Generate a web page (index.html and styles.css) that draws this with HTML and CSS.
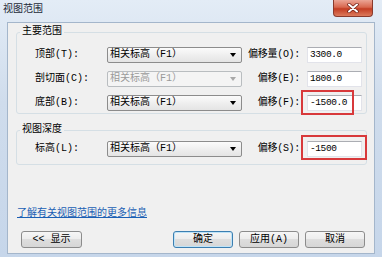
FILE: index.html
```html
<!DOCTYPE html>
<html lang="zh-CN">
<head>
    <meta charset="UTF-8">
    <meta name="viewport" content="width=device-width, initial-scale=1.0">
    <title>视图范围</title>
    <link rel="stylesheet" href="styles.css">
</head>
<body>
    <div class="window">
        <div class="titlebar">
            <span class="title">视图范围</span>
            <button class="close">
                <svg width="14" height="10" viewBox="0 0 14 10">
                    <path d="M3 1.5 L11 8.5 M11 1.5 L3 8.5" stroke="#6b1a10" stroke-width="3.4" stroke-linecap="round"/>
                    <path d="M3 1.5 L11 8.5 M11 1.5 L3 8.5" stroke="#ffffff" stroke-width="2" stroke-linecap="round"/>
                </svg>
            </button>
        </div>

        <div class="client">
            <fieldset class="group group-main">
                <legend>主要范围</legend>
                <div class="rows">
                    <div class="row">
                        <label class="label">顶部(T):</label>
                        <div class="select"><span>相关标高（F1）</span><i class="arrow"></i></div>
                        <label class="offset-label">偏移量(O):</label>
                        <div class="input">3300.0</div>
                    </div>
                    <div class="row">
                        <label class="label">剖切面(C):</label>
                        <div class="select disabled"><span>相关标高（F1）</span><i class="arrow"></i></div>
                        <label class="offset-label">偏移(E):</label>
                        <div class="input">1800.0</div>
                    </div>
                    <div class="row">
                        <label class="label">底部(B):</label>
                        <div class="select"><span>相关标高（F1）</span><i class="arrow"></i></div>
                        <label class="offset-label">偏移(F):</label>
                        <div class="input">-1500.0<span class="mark mark-bottom"></span></div>
                    </div>
                </div>
            </fieldset>

            <fieldset class="group group-depth">
                <legend>视图深度</legend>
                <div class="rows">
                    <div class="row">
                        <label class="label">标高(L):</label>
                        <div class="select"><span>相关标高（F1）</span><i class="arrow"></i></div>
                        <label class="offset-label">偏移(S):</label>
                        <div class="input">-1500<span class="mark mark-depth"></span></div>
                    </div>
                </div>
            </fieldset>

            <a class="link" href="#">了解有关视图范围的更多信息</a>

            <div class="buttons">
                <button class="btn btn-show">&lt;&lt; 显示</button>
                <button class="btn btn-default">确定</button>
                <button class="btn">应用(A)</button>
                <button class="btn">取消</button>
            </div>
        </div>
    </div>
</body>
</html>
```

FILE: styles.css
```css
body {
    margin: 0;
    padding: 0;
    font-family: "Liberation Mono", "Noto Sans CJK SC", monospace;
    font-size: 10px;
    color: #000;
}

.window {
    width: 382px;
    height: 257px;
    display: flex;
    flex-direction: column;
    background: linear-gradient(#e3ecf6, #cfdcec 40%, #c6d6ea);
}

.titlebar {
    height: 22px;
    display: flex;
    align-items: flex-start;
    flex-shrink: 0;
}

.title {
    margin: 3px 0 0 3px;
    line-height: 14px;
    color: #1d2a38;
}

.close {
    margin-left: auto;
    margin-right: 9px;
    width: 40px;
    height: 17px;
    padding: 0;
    border: 1px solid #8a3a2c;
    border-top: none;
    border-radius: 0 0 4px 4px;
    background: linear-gradient(#eba595, #d8684f 45%, #c33d23 55%, #dc7a5c);
    display: flex;
    align-items: center;
    justify-content: center;
}

.client {
    flex: 1;
    margin: 0 7px 3px;
    background: #f0f0f0;
    border: 1px solid #a4b6cb;
    display: flex;
    flex-direction: column;
    align-items: flex-start;
}

.group {
    margin: 2px 0 0 8px;
    padding: 0;
    width: 351px;
    box-sizing: border-box;
    border: 1px solid #d5dfe5;
    border-radius: 3px;
}

.group legend {
    margin-left: 3px;
    padding: 0 2px;
    line-height: 14px;
}

.rows {
    display: flex;
    flex-direction: column;
    gap: 8px;
    padding: 8px 4px 2px 18px;
}

.group-depth {
    margin-top: 9px;
}

.group-depth .rows {
    padding-top: 4px;
    padding-bottom: 7px;
}

.row {
    display: flex;
    align-items: center;
    height: 16px;
}

.label {
    width: 72px;
    line-height: 16px;
}

.select {
    width: 135px;
    height: 16px;
    box-sizing: border-box;
    border: 1px solid #8c8c8c;
    border-radius: 2px;
    background: linear-gradient(#fbfbfb, #efefef 50%, #e4e4e4);
    display: flex;
    align-items: center;
    padding-left: 2px;
    line-height: 14px;
}

.select span {
    flex: 1;
}

.arrow {
    width: 0;
    height: 0;
    border-left: 3px solid transparent;
    border-right: 3px solid transparent;
    border-top: 4px solid #000;
    margin-right: 5px;
}

.select.disabled {
    border-color: #b9bdc0;
    background: #f4f4f4;
    color: #9a9a9a;
}

.select.disabled .arrow {
    border-top-color: #a8a8a8;
}

.offset-label {
    width: 58px;
    margin-right: 7px;
    text-align: right;
    line-height: 16px;
    white-space: nowrap;
    letter-spacing: -0.3px;
}

.input {
    position: relative;
    width: 55px;
    height: 16px;
    box-sizing: border-box;
    border: 1px solid #e2e3ea;
    border-top-color: #abadb3;
    background: #fff;
    padding-left: 2px;
    font-size: 9.5px;
    letter-spacing: -0.4px;
    line-height: 14px;
}

.mark {
    position: absolute;
    border: 2px solid #d8393b;
    box-sizing: border-box;
}

.mark-bottom {
    left: -7px;
    top: -6px;
    width: 53px;
    height: 25px;
}

.mark-depth {
    left: -7px;
    top: -7px;
    width: 66px;
    height: 25px;
}

.link {
    margin: 42px 0 0 9px;
    line-height: 14px;
    color: #1a5fb4;
    text-decoration: underline;
}

.buttons {
    display: flex;
    gap: 6px;
    margin: 10px 0 0 13px;
}

.btn {
    width: 60px;
    height: 17px;
    padding: 0;
    font-family: inherit;
    font-size: 10px;
    color: #000;
    border: 1px solid #8c8c8c;
    border-radius: 3px;
    background: linear-gradient(#f6f6f6, #ececec 50%, #dedede 50%, #d6d6d6);
    line-height: 15px;
}

.btn-show {
    width: 61px;
    margin-right: 85px;
}

.btn-default {
    border-color: #3c7fb1;
    box-shadow: inset 0 0 0 1px #bfe3f7;
}
```
